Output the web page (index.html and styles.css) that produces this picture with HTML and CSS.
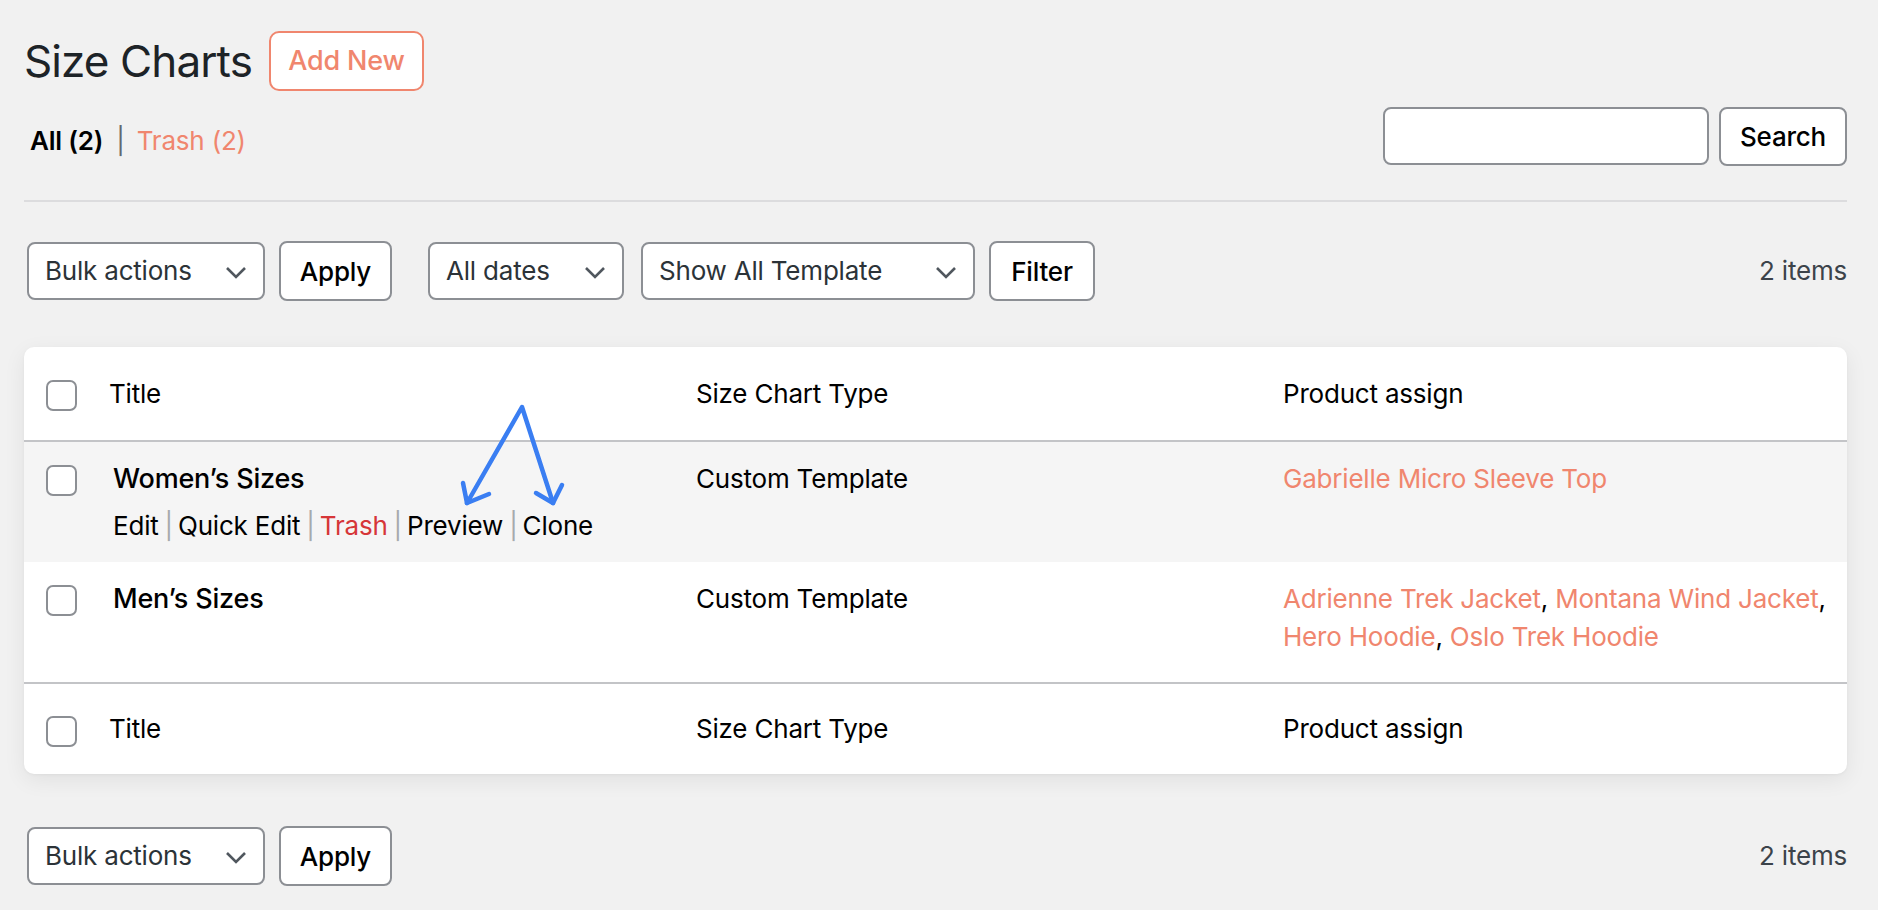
FILE: index.html
```html
<!DOCTYPE html>
<html lang="en">
<head>
<meta charset="utf-8">
<title>Size Charts</title>
<link rel="stylesheet" href="styles.css">
</head>
<body>
<div class="wrap">
  <div class="title-row">
    <h1 class="page-title">Size Charts</h1>
    <a class="add-new">Add New</a>
  </div>

  <div class="sub-row">
    <div class="subsubsub"><span class="current">All (2)</span><span class="sep">|</span><a class="link">Trash (2)</a></div>
    <div class="search-box">
      <div class="search-input"></div>
      <button class="btn btn-search">Search</button>
    </div>
  </div>

  <div class="divider"></div>

  <div class="tablenav tablenav-top">
    <div class="actions">
      <div class="select w-bulk"><span>Bulk actions</span><svg class="chev" viewBox="0 0 22 13"><path d="M2 2 L11 11 L20 2"/></svg></div>
      <button class="btn btn-apply">Apply</button>
      <div class="select w-dates"><span>All dates</span><svg class="chev" viewBox="0 0 22 13"><path d="M2 2 L11 11 L20 2"/></svg></div>
      <div class="select w-template"><span>Show All Template</span><svg class="chev" viewBox="0 0 22 13"><path d="M2 2 L11 11 L20 2"/></svg></div>
      <button class="btn btn-filter">Filter</button>
    </div>
    <div class="count">2 items</div>
  </div>

  <div class="card">
    <div class="trow thead">
      <div class="cb"><span class="checkbox"></span></div>
      <div class="cell">Title</div>
      <div class="cell">Size Chart Type</div>
      <div class="cell">Product assign</div>
    </div>

    <div class="trow tbody alt">
      <div class="cb"><span class="checkbox"></span></div>
      <div class="cell title-cell">
        <div class="row-title">Women’s Sizes</div>
        <div class="row-actions">Edit<span class="sep2">|</span>Quick Edit<span class="sep2">|</span><span class="red">Trash</span><span class="sep2">|</span>Preview<span class="sep2">|</span>Clone</div>
      </div>
      <div class="cell">Custom Template</div>
      <div class="cell"><a class="link">Gabrielle Micro Sleeve Top</a></div>
    </div>

    <div class="trow tbody">
      <div class="cb"><span class="checkbox"></span></div>
      <div class="cell title-cell">
        <div class="row-title">Men’s Sizes</div>
        <div class="row-actions hidden">Edit<span class="sep2">|</span>Quick Edit<span class="sep2">|</span><span class="red">Trash</span><span class="sep2">|</span>Preview<span class="sep2">|</span>Clone</div>
      </div>
      <div class="cell">Custom Template</div>
      <div class="cell products"><span class="line"><a class="link">Adrienne Trek Jacket</a>, <a class="link">Montana Wind Jacket</a>,</span><span class="line"><a class="link">Hero Hoodie</a>, <a class="link">Oslo Trek Hoodie</a></span></div>
    </div>

    <div class="trow tfoot">
      <div class="cb"><span class="checkbox"></span></div>
      <div class="cell">Title</div>
      <div class="cell">Size Chart Type</div>
      <div class="cell">Product assign</div>
    </div>

    <svg class="annotation" viewBox="0 0 130 120" width="130" height="120">
      <path d="M17 108 L72 12 L103 108"/>
      <path d="M13 88 L17 108 L39 99"/>
      <path d="M86 98 L103 108 L112 90"/>
    </svg>
  </div>

  <div class="tablenav tablenav-bottom">
    <div class="actions">
      <div class="select w-bulk"><span>Bulk actions</span><svg class="chev" viewBox="0 0 22 13"><path d="M2 2 L11 11 L20 2"/></svg></div>
      <button class="btn btn-apply">Apply</button>
    </div>
    <div class="count">2 items</div>
  </div>
</div>
</body>
</html>
```

FILE: styles.css
```css
* { box-sizing: border-box; }

html, body {
  margin: 0;
  padding: 0;
  background: #f1f1f1;
}

body {
  font-family: Inter, "Noto Sans", "Liberation Sans", sans-serif;
  font-size: 26px;
  color: #000;
  line-height: 38px;
  letter-spacing: -0.2px;
}

.wrap {
  padding: 0 31px 0 24px;
}

/* Title row */
.title-row {
  display: flex;
  align-items: center;
  gap: 17px;
  padding-top: 31px;
}

.page-title {
  margin: 0;
  font-size: 44px;
  font-weight: 400;
  line-height: 60px;
  color: #1d2327;
  letter-spacing: -0.9px;
}

.add-new {
  display: flex;
  align-items: center;
  justify-content: center;
  width: 155px;
  height: 60px;
  border: 2px solid #f0866e;
  border-radius: 10px;
  background: #fff;
  color: #f0866e;
  font-size: 27px;
  font-weight: 500;
}

/* Sub row */
.sub-row {
  display: flex;
  justify-content: space-between;
  align-items: flex-start;
  margin-top: 16px;
}

.subsubsub {
  margin-top: 15px;
  margin-left: 6px;
  display: flex;
  align-items: center;
}

.subsubsub .current {
  font-weight: 600;
  color: #000;
}

.subsubsub .sep {
  color: #646970;
  margin: 0 12px 0 13px;
}

.link {
  color: #f0866e;
}

.search-box {
  display: flex;
  gap: 10px;
}

.search-input {
  width: 326px;
  height: 58px;
  background: #fff;
  border: 2px solid #8c8f94;
  border-radius: 8px;
}

.btn {
  font-family: inherit;
  font-size: 26px;
  font-weight: 500;
  letter-spacing: -0.2px;
  color: #000;
  background: #fff;
  border: 2px solid #8c8f94;
  border-radius: 8px;
  padding: 0;
  height: 60px;
}

.btn-search { width: 128px; height: 59px; }
.btn-apply { width: 113px; }
.btn-filter { width: 106px; }

.divider {
  margin-top: 34px;
  height: 2px;
  background: #dcdcde;
}

/* Table nav */
.tablenav {
  display: flex;
  justify-content: space-between;
  align-items: center;
}

.tablenav-top { margin-top: 39px; }
.tablenav-bottom { margin-top: 52px; }

.actions {
  display: flex;
  align-items: center;
  margin-left: 3px;
}

.select {
  display: flex;
  align-items: center;
  justify-content: space-between;
  height: 58px;
  background: #fff;
  border: 2px solid #8c8f94;
  border-radius: 8px;
  padding: 0 16px 0 16px;
  color: #2c3338;
}

.chev {
  width: 22px;
  height: 13px;
  fill: none;
  stroke: #50575e;
  stroke-width: 2.6;
  margin-top: 3px;
}

.w-bulk { width: 238px; }
.w-dates { width: 196px; }
.w-template { width: 334px; }

.actions .btn-apply { margin-left: 14px; }
.actions .w-dates { margin-left: 36px; }
.actions .w-template { margin-left: 17px; }
.actions .btn-filter { margin-left: 14px; }

.count {
  color: #3c434a;
}

/* Card / table */
.card {
  position: relative;
  margin-top: 46px;
  background: #fff;
  border-radius: 10px;
  box-shadow: 0 6px 22px rgba(0, 0, 0, 0.07), 0 1px 3px rgba(0, 0, 0, 0.04);
  overflow: hidden;
}

.trow {
  display: grid;
  grid-template-columns: 63px 587px 587px 1fr;
  padding-left: 22px;
}

.thead {
  height: 95px;
  align-items: center;
  border-bottom: 2px solid #c3c4c7;
}

.tfoot {
  height: 92px;
  align-items: center;
  border-top: 2px solid #c3c4c7;
}

.tbody {
  padding-top: 18px;
  padding-bottom: 16px;
  min-height: 120px;
  align-items: start;
}

.tbody.alt {
  background: #f5f5f5;
}

.checkbox {
  display: block;
  width: 31px;
  height: 31px;
  border: 2px solid #8c8f94;
  border-radius: 7px;
  background: #fff;
}

.tbody .cb { padding-top: 5px; }
.thead .cb { margin-top: 4px; }
.tfoot .cb { margin-top: 4px; }

.title-cell { padding-left: 4px; }

.row-title {
  font-weight: 500;
  font-size: 27px;
}

.row-actions {
  margin-top: 9px;
  color: #000;
  white-space: nowrap;
}

.row-actions.hidden { visibility: hidden; }

.sep2 {
  color: #a7aaad;
  margin: 0 5px 0 6px;
}

.red { color: #d63638; }

.products .line {
  display: block;
  white-space: nowrap;
}

.annotation {
  position: absolute;
  left: 426px;
  top: 48px;
  fill: none;
  stroke: #3a7ef2;
  stroke-width: 4.5;
  stroke-linecap: round;
  stroke-linejoin: round;
}
```
